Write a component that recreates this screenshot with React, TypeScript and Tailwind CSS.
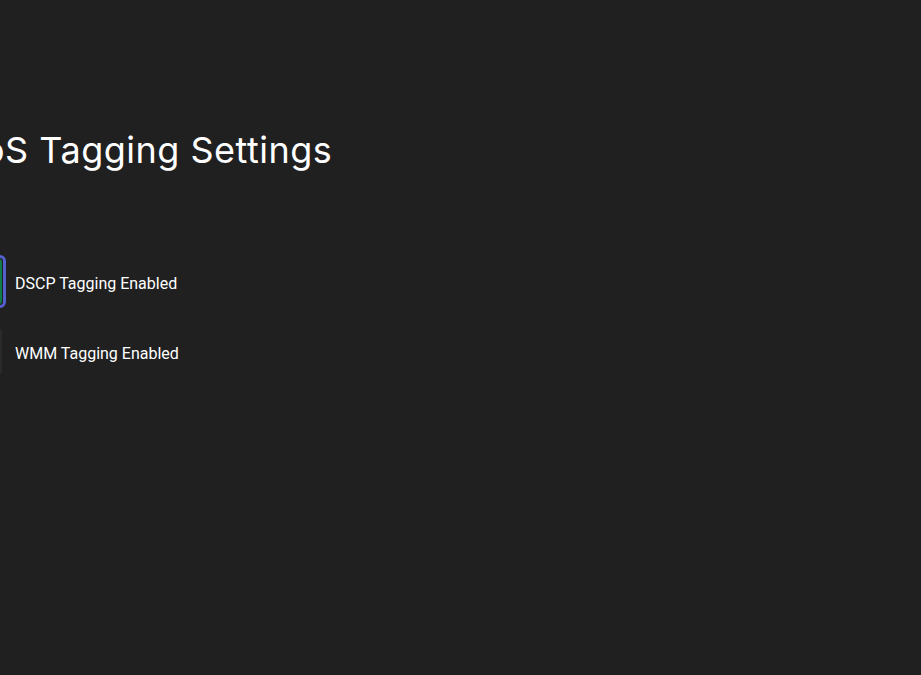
export default function App() {
  return (
    <div className="w-[921px] h-[675px] bg-[#202020] overflow-hidden relative" style={{ fontFamily: "Roboto, 'Noto Sans', sans-serif" }}>
      <div className="ml-[-46px] pt-[126px]">
        <h1 className="ml-[1px] text-[36px] leading-[48px] text-white font-normal whitespace-nowrap tracking-[0.5px]" style={{ fontFamily: "Inter, Roboto, sans-serif" }}>QoS Tagging Settings</h1>
        <div className="mt-[81px] flex flex-col gap-[20px]">
          <div className="flex items-center gap-[9px]">
            <div className="w-[52px] h-[53px] rounded-[6px] border-[3px] border-[#5560cf] p-[1px]">
              <div className="w-full h-full rounded-[3px] bg-[#0f7b4a]" />
            </div>
            <span className="text-[16px] text-white pt-[4px]">DSCP Tagging Enabled</span>
          </div>
          <div className="flex items-center gap-[13px]">
            <div className="w-[48px] h-[47px] rounded-[4px] bg-[#2a2a2a]" />
            <span className="text-[16px] text-white pt-[4px]">WMM Tagging Enabled</span>
          </div>
        </div>
      </div>
    </div>
  );
}
